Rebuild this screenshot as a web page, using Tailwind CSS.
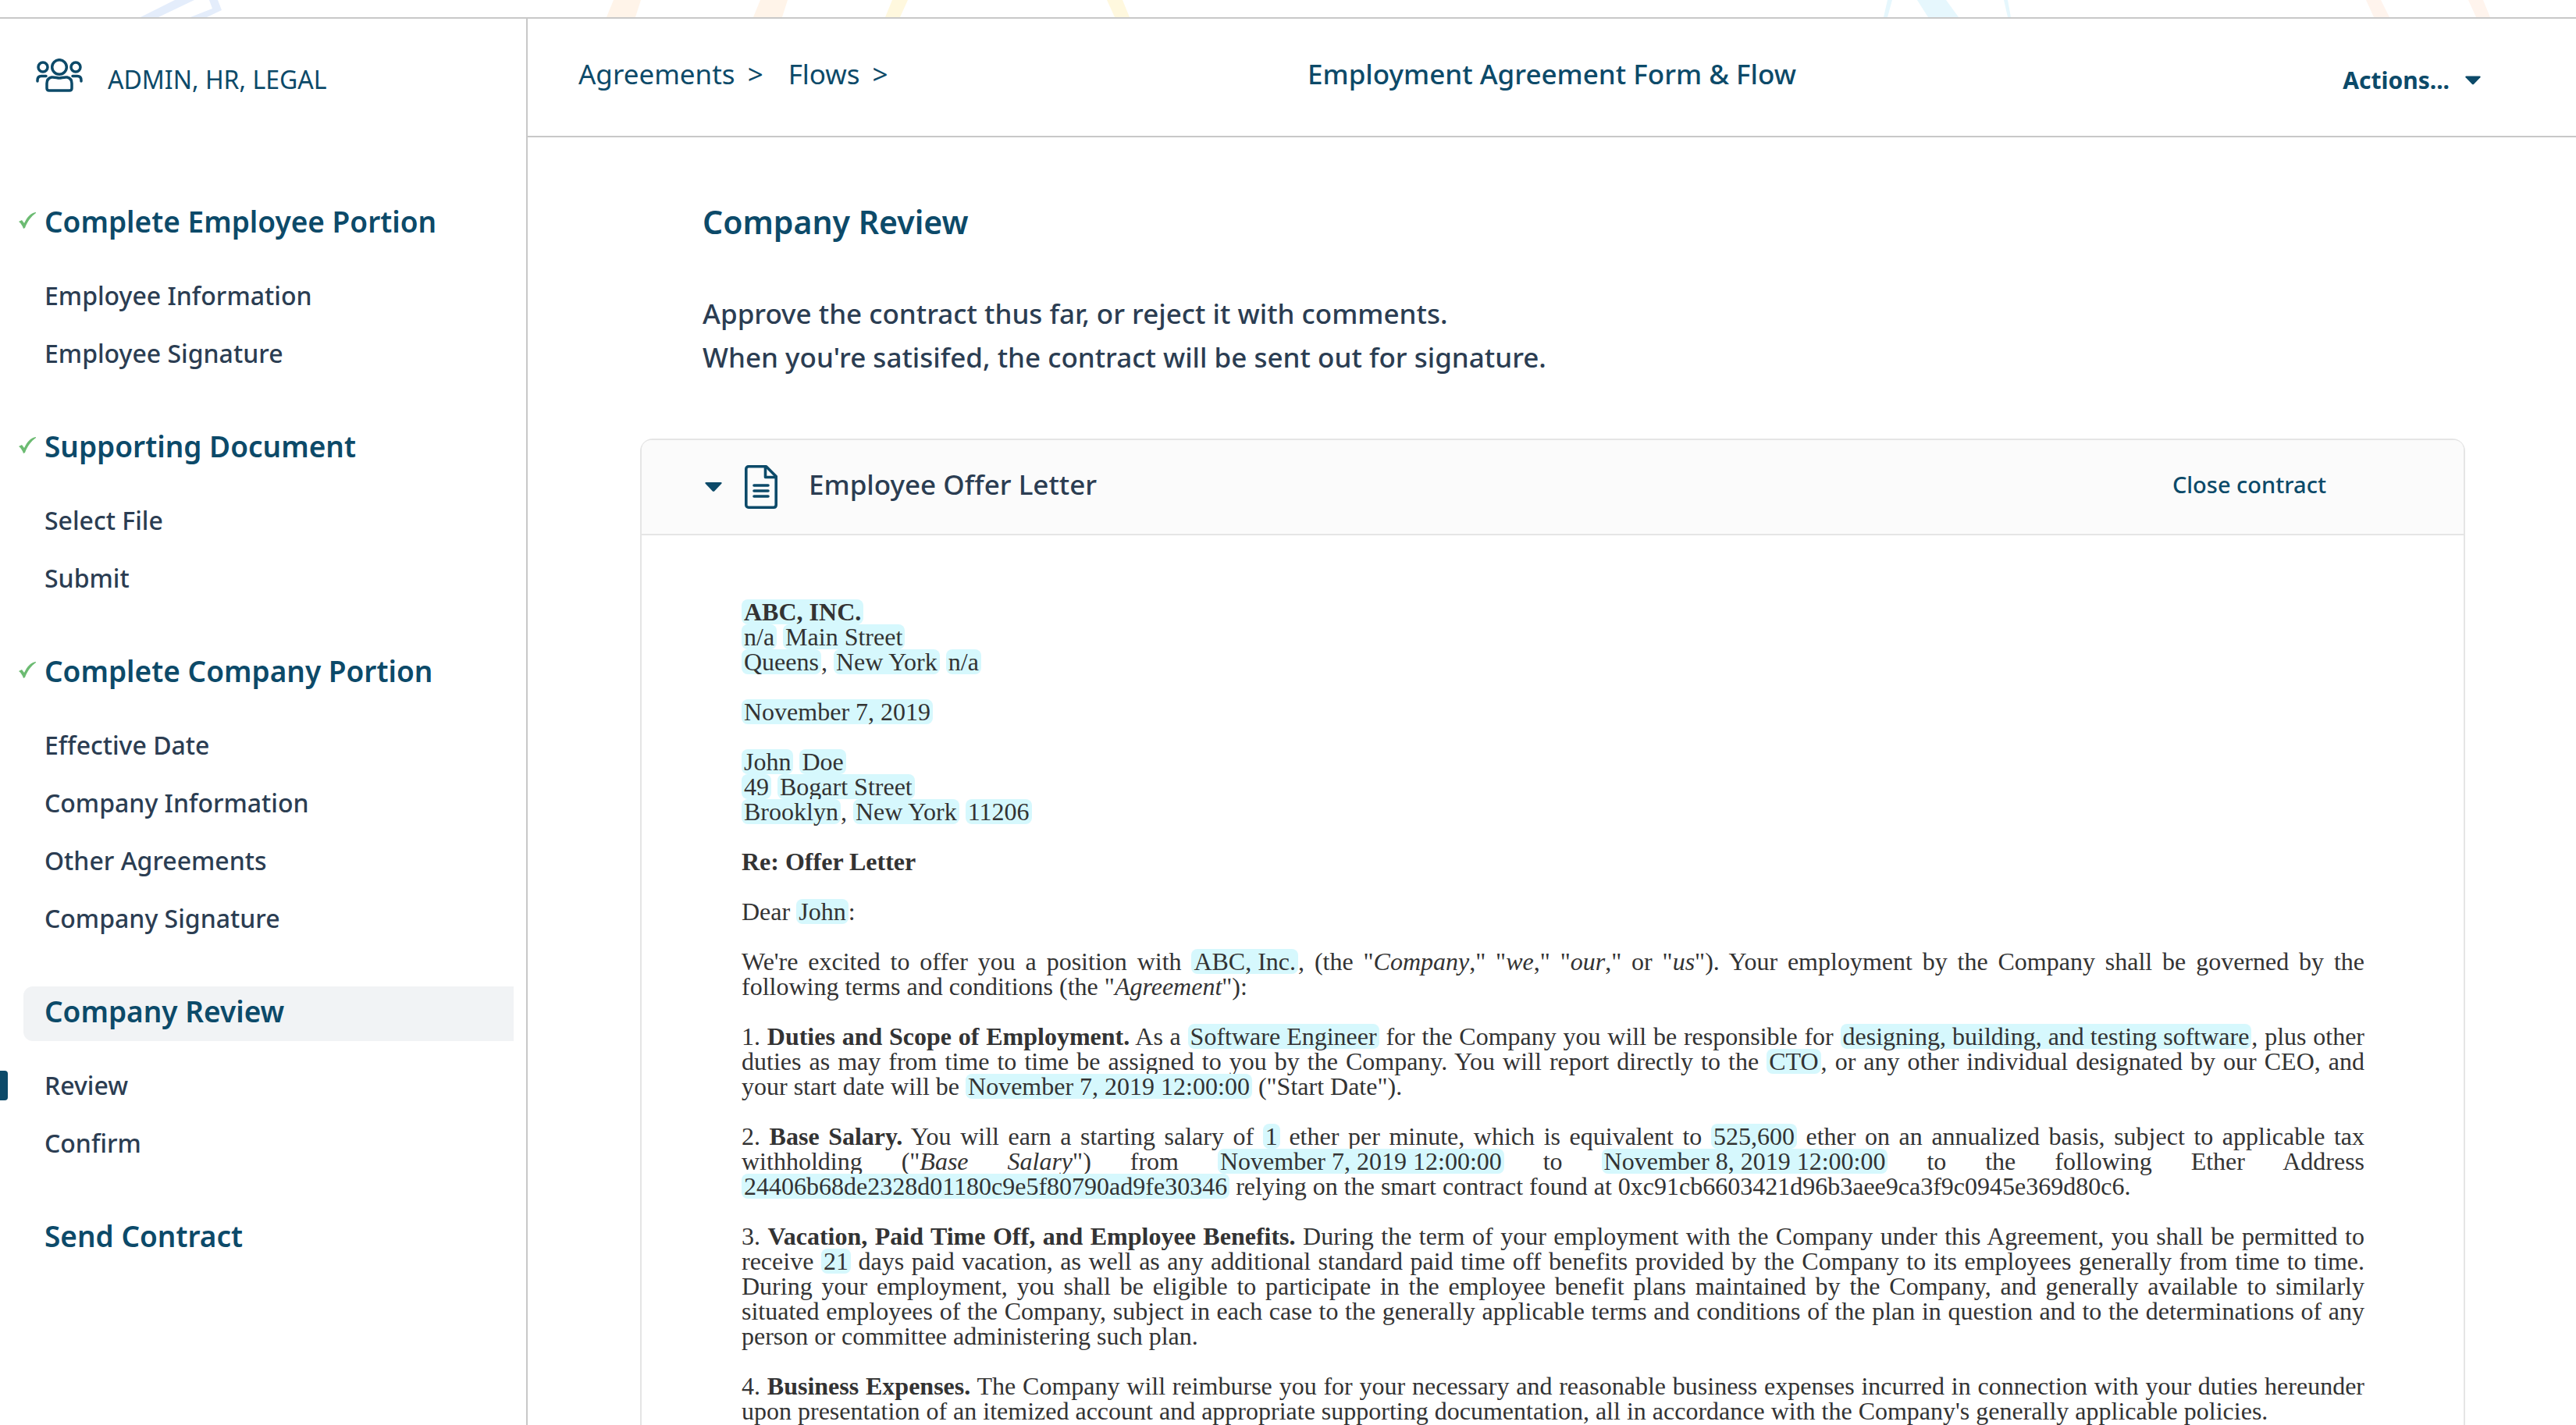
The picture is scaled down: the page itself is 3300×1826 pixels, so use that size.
<!DOCTYPE html>
<html lang="en">
<head>
<meta charset="utf-8">
<title>Employment Agreement Form &amp; Flow</title>
<script src="https://cdn.jsdelivr.net/npm/@tailwindcss/browser@4"></script>
</head>
<body class="flex min-h-screen flex-col bg-white font-['Noto_Sans',sans-serif] text-[#2b3d52]">

<!-- Decorative strip above the app -->
<div class="h-6 shrink-0 border-b-2 border-[#c8c8c8]">
  <svg class="block h-full w-full" viewBox="0 0 3300 22" preserveAspectRatio="none" aria-hidden="true">
    <g fill="#e4edfb"><path d="M180 22h23L249 0h-25z"/><path d="M244 22h21l19-9-5-13h-11l4 11z"/></g>
    <g fill="#fff4e9"><path d="M777 22h37l7-22h-35z"/><path d="M965 22h37l7-22h-35z"/></g>
    <g fill="#fff8de"><path d="M1134 22h19l10-22h-20z"/><path d="M1428 22h19l-9-22h-20z"/></g>
    <g fill="#e6f7fd"><path d="M2413 22h5l6-22h-6z"/><path d="M2470 22h39L2493 0h-37z"/><path d="M2572 22h4l-4-22h-5z"/></g>
    <g fill="#fff4ed"><path d="M3041 22h20L3050 0h-19z"/><path d="M3172 22h18l-9-22h-19z"/></g>
  </svg>
</div>

<div class="flex grow">
  <aside class="w-[676px] shrink-0 border-r-2 border-[#c8c8c8] pt-[50px]">
    <div class="flex h-11 items-center gap-8 pl-[46px] text-[#0c4a69]">
      <svg class="h-[43px] w-[60px]" viewBox="0 0 60 43" fill="none" stroke="currentColor" stroke-width="3.500" stroke-linecap="round" aria-hidden="true">
        <circle cx="30" cy="11" r="9.3"/><circle cx="9" cy="11" r="6"/><circle cx="51" cy="11" r="6"/>
        <path d="M17 41c-2 0-3-1-3-3v-6c0-4 2-7 6-8 4-.6 7 1 10 1s6-1.600 10-1c4 1 6 4 6 8v6c0 2-1 3-3 3z"/>
        <path d="M2 29v-1c0-4 2-5.500 5-5.500h6"/><path d="M58 29v-1c0-4-2-5.500-5-5.500h-6"/>
      </svg>
      <span class="pt-3 text-[32px] leading-11">ADMIN, HR, LEGAL</span>
    </div>

    <nav class="flex flex-col gap-[50px] pt-[134px] text-[32px] leading-[74px] font-medium">
      <section>
        <h2 class="mb-5 ml-6 flex h-[70px] items-center gap-[11px] pb-2 text-[37px] leading-none font-semibold text-[#0c4a69]">
          <svg class="h-[22px] w-[22px]" viewBox="0 0 22 22" fill="#6cbb72" aria-hidden="true"><path d="M0 12l4-2 3 4C11 6 15 1 22 0v1C16 5 11 12 8 20l-2 1C5 18 3 14 0 12z"/></svg>
          Complete Employee Portion
        </h2>
        <ul class="pl-[57px]"><li><a href="#">Employee Information</a></li><li><a href="#">Employee Signature</a></li></ul>
      </section>
      <section>
        <h2 class="mb-5 ml-6 flex h-[70px] items-center gap-[11px] pb-2 text-[37px] leading-none font-semibold text-[#0c4a69]">
          <svg class="h-[22px] w-[22px]" viewBox="0 0 22 22" fill="#6cbb72" aria-hidden="true"><path d="M0 12l4-2 3 4C11 6 15 1 22 0v1C16 5 11 12 8 20l-2 1C5 18 3 14 0 12z"/></svg>
          Supporting Document
        </h2>
        <ul class="pl-[57px]"><li><a href="#">Select File</a></li><li><a href="#">Submit</a></li></ul>
      </section>
      <section>
        <h2 class="mb-5 ml-6 flex h-[70px] items-center gap-[11px] pb-2 text-[37px] leading-none font-semibold text-[#0c4a69]">
          <svg class="h-[22px] w-[22px]" viewBox="0 0 22 22" fill="#6cbb72" aria-hidden="true"><path d="M0 12l4-2 3 4C11 6 15 1 22 0v1C16 5 11 12 8 20l-2 1C5 18 3 14 0 12z"/></svg>
          Complete Company Portion
        </h2>
        <ul class="pl-[57px]"><li><a href="#">Effective Date</a></li><li><a href="#">Company Information</a></li><li><a href="#">Other Agreements</a></li><li><a href="#">Company Signature</a></li></ul>
      </section>
      <section>
        <h2 class="mr-4 mb-5 ml-[30px] flex h-[70px] items-center rounded-l-xl bg-[#f1f3f5] pb-2 pl-[27px] text-[37px] leading-none font-semibold text-[#0c4a69]">Company Review</h2>
        <ul>
          <li class="flex items-center gap-[47px]"><span class="h-[38px] w-2.5 rounded-r bg-[#0c4a69]"></span><a href="#" aria-current="page">Review</a></li>
          <li class="pl-[57px]"><a href="#">Confirm</a></li>
        </ul>
      </section>
      <section>
        <h2 class="ml-[57px] flex h-[70px] items-center pb-2 text-[37px] leading-none font-semibold text-[#0c4a69]">Send Contract</h2>
      </section>
    </nav>
  </aside>

  <div class="flex min-w-0 grow flex-col">
    <header class="grid h-38 shrink-0 grid-cols-[1fr_auto_1fr] items-center border-b-2 border-[#c8c8c8] text-[35px] leading-11 text-[#0c4a69]">
      <nav class="flex gap-4 pb-2 pl-[65px]">
        <a href="#">Agreements</a><span>&gt;</span><a class="ml-4" href="#">Flows</a><span>&gt;</span>
      </nav>
      <h1 class="pb-2 font-medium">Employment Agreement Form &amp; Flow</h1>
      <button type="button" class="flex items-center gap-5 justify-self-end pt-2 pr-[122px] text-[30px] font-bold">Actions...
        <svg class="h-3 w-5" viewBox="0 0 22 12" fill="currentColor" aria-hidden="true"><path d="M1.500 0h19c1.200 0 1.500 1 .8 1.800l-9 9.400c-.8.8-1.800.8-2.600 0l-9-9.400C0 1 .3 0 1.500 0z"/></svg>
      </button>
    </header>

    <main class="flex grow flex-col pt-20 pr-[142px] pl-36">
      <div class="pl-20 leading-14">
        <h2 class="text-[41px] leading-14 font-semibold text-[#0c4a69]">Company Review</h2>
        <p class="pt-[62px] text-[35px] leading-14 font-medium">Approve the contract thus far, or reject it with comments.<br>When you're satisifed, the contract will be sent out for signature.</p>
      </div>

      <article class="mt-[76px] grow rounded-t-2xl border-2 border-b-0 border-[#e5e5e5]">
        <header class="flex h-[122px] items-center rounded-t-xl border-b-2 border-[#e5e5e5] bg-[#fbfbfb] pr-44 pl-[81px]">
          <button type="button" class="flex grow items-center text-left text-[35px] font-medium" aria-expanded="true">
            <svg class="mr-[29px] h-3 w-[22px] text-[#0c4a69]" viewBox="0 0 22 12" fill="currentColor" aria-hidden="true"><path d="M1.500 0h19c1.200 0 1.500 1 .8 1.800l-9 9.400c-.8.8-1.800.8-2.600 0l-9-9.400C0 1 .3 0 1.500 0z"/></svg>
            <svg class="mr-10 h-14 w-[42px] text-[#0c4a69]" viewBox="0 0 42 56" fill="none" stroke="currentColor" stroke-width="3.600" stroke-linecap="round" stroke-linejoin="round" aria-hidden="true">
              <path d="M5 1.800h22.500L40.200 14.500V51c0 2-1.200 3.200-3.200 3.200H5c-2 0-3.200-1.200-3.200-3.200V5c0-2 1.200-3.200 3.200-3.200z"/><path d="M26.500 2v13.500H40"/><path d="M12 26h18M12 33h18M12 40h18"/>
            </svg>
            <span class="pb-1.5">Employee Offer Letter</span>
          </button>
          <button type="button" class="pb-1.5 text-[29px] font-medium text-[#0c4a69]">Close contract</button>
        </header>

        <div class="flex flex-col gap-8 pr-[127px] pl-[128px] pt-[82px] text-justify font-['Liberation_Serif',serif] text-[32px] leading-8 text-[#333333] [&_mark]:inline-block [&_mark]:rounded-lg [&_mark]:bg-[#d6f8fd] [&_mark]:px-[3px] [&_mark]:text-[#333333]">
          <p><mark><b>ABC, INC.</b></mark><br><mark>n/a</mark> <mark>Main Street</mark><br><mark>Queens</mark>, <mark>New York</mark> <mark>n/a</mark></p>
          <p><mark>November 7, 2019</mark></p>
          <p><mark>John</mark> <mark>Doe</mark><br><mark>49</mark> <mark>Bogart Street</mark><br><mark>Brooklyn</mark>, <mark>New York</mark> <mark>11206</mark></p>
          <p><b>Re: Offer Letter</b></p>
          <p>Dear <mark>John</mark>:</p>
          <p>We're excited to offer you a position with <mark>ABC, Inc.</mark>, (the "<i>Company</i>," "<i>we</i>," "<i>our</i>," or "<i>us</i>"). Your employment by the Company shall be governed by the following terms and conditions (the "<i>Agreement</i>"):</p>
          <p>1. <b>Duties and Scope of Employment.</b> As a <mark>Software Engineer</mark> for the Company you will be responsible for <mark>designing, building, and testing software</mark>, plus other duties as may from time to time be assigned to you by the Company. You will report directly to the <mark>CTO</mark>, or any other individual designated by our CEO, and your start date will be <mark>November 7, 2019 12:00:00</mark> ("Start Date").</p>
          <p>2. <b>Base Salary.</b> You will earn a starting salary of <mark>1</mark> ether per minute, which is equivalent to <mark>525,600</mark> ether on an annualized basis, subject to applicable tax withholding ("<i>Base Salary</i>") from <mark>November 7, 2019 12:00:00</mark> to <mark>November 8, 2019 12:00:00</mark> to the following Ether Address <mark>24406b68de2328d01180c9e5f80790ad9fe30346</mark> relying on the smart contract found at 0xc91cb6603421d96b3aee9ca3f9c0945e369d80c6.</p>
          <p>3. <b>Vacation, Paid Time Off, and Employee Benefits.</b> During the term of your employment with the Company under this Agreement, you shall be permitted to receive <mark>21</mark> days paid vacation, as well as any additional standard paid time off benefits provided by the Company to its employees generally from time to time. During your employment, you shall be eligible to participate in the employee benefit plans maintained by the Company, and generally available to similarly situated employees of the Company, subject in each case to the generally applicable terms and conditions of the plan in question and to the determinations of any person or committee administering such plan.</p>
          <p>4. <b>Business Expenses.</b> The Company will reimburse you for your necessary and reasonable business expenses incurred in connection with your duties hereunder upon presentation of an itemized account and appropriate supporting documentation, all in accordance with the Company's generally applicable policies.</p>
        </div>
      </article>
    </main>
  </div>
</div>
</body>
</html>
